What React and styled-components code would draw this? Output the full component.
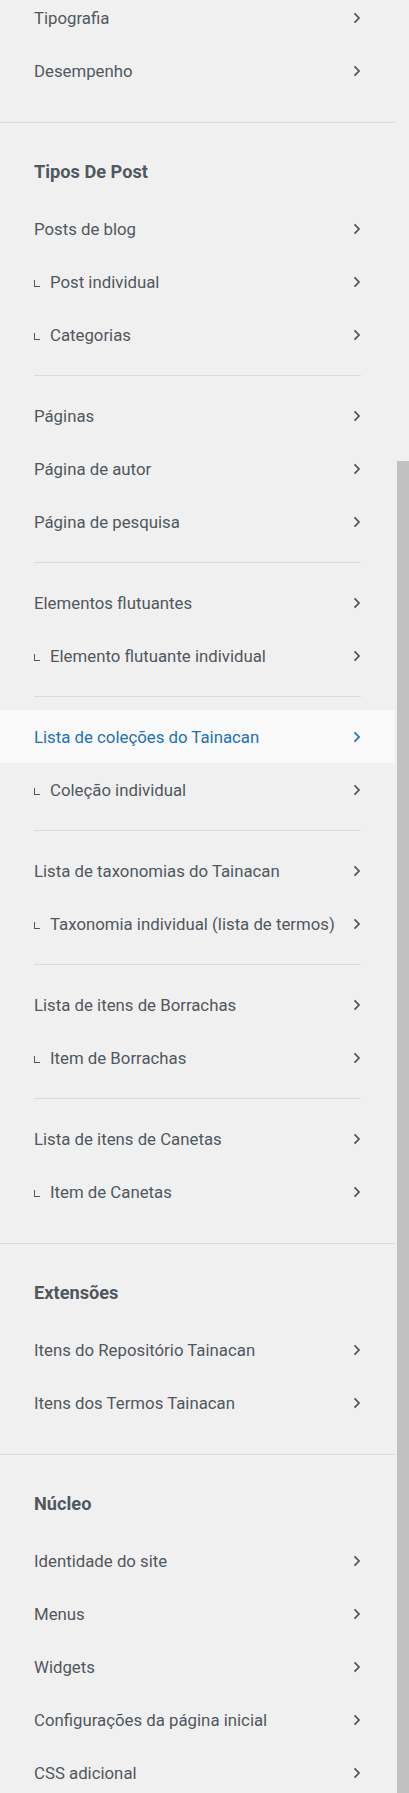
import React from "react";
import styled, { createGlobalStyle } from "styled-components";

const GlobalStyle = createGlobalStyle`
  html, body {
    margin: 0;
    padding: 0;
    background: #f0f0f1;
  }
  body {
    font-family: Roboto, "Noto Sans", "Liberation Sans", sans-serif;
    overflow: hidden;
  }
`;

const Frame = styled.div`
  display: flex;
  width: 409px;
  height: 1793px;
  overflow: hidden;
  background: #f0f0f1;
`;

const Panel = styled.div`
  width: 395px;
  flex: none;
  margin-top: -9px; // page is scrolled a bit
`;

const ScrollTrack = styled.div`
  flex: none;
  width: 14px;
  display: flex;
  flex-direction: column;
  padding-left: 2px;
  box-sizing: border-box;
`;

const ScrollThumb = styled.div`
  margin-top: 461px;
  flex: 1;
  background: #c1c1c1;
`;

const Section = styled.ul`
  list-style: none;
  margin: 0;
  padding: 0 0 25px;
  border-top: ${(p) => (p.$first ? "none" : "1px solid #dcdcde")};
`;

const Heading = styled.h3`
  margin: 0;
  padding: 37px 34px 18px;
  font-size: 18.2px;
  line-height: 24px;
  font-weight: 700;
  color: #50575e;
`;

const Row = styled.li`
  display: flex;
  align-items: center;
  height: 53px;
  padding: 0 34px;
  font-size: 16.8px;
  color: ${(p) => (p.$active ? "#2271b1" : "#50575e")};
  background: ${(p) => (p.$active ? "#f9f9f9" : "transparent")};
  cursor: pointer;
`;

const Label = styled.span`
  flex: 1;
  display: flex;
  align-items: center;
  white-space: nowrap;
`;

const SubMark = styled.span`
  display: inline-block;
  width: 5px;
  height: 6px;
  border-left: 1.5px solid #50575e;
  border-bottom: 1.5px solid #50575e;
  margin: 4px 10px 0 0;
`;

const Divider = styled.li`
  height: 1px;
  margin: 14px 34px 13px;
  background: #dcdcde;
`;

const Chevron = ({ color }) => (
  <svg width="8" height="12" viewBox="0 0 8 12" style={{ flex: "none" }}>
    <path d="M1.5 1.3 L6 6 L1.5 10.7" fill="none" stroke={color} strokeWidth="1.8" />
  </svg>
);

const Item = ({ label, sub, active }) => (
  <Row $active={active}>
    <Label>
      {sub && <SubMark />}
      {label}
    </Label>
    <Chevron color={active ? "#2271b1" : "#50575e"} />
  </Row>
);

const groups = [
  {
    first: true,
    blocks: [[{ label: "Tipografia" }, { label: "Desempenho" }]],
  },
  {
    title: "Tipos De Post",
    blocks: [
      [
        { label: "Posts de blog" },
        { label: "Post individual", sub: true },
        { label: "Categorias", sub: true },
      ],
      [
        { label: "Páginas" },
        { label: "Página de autor" },
        { label: "Página de pesquisa" },
      ],
      [
        { label: "Elementos flutuantes" },
        { label: "Elemento flutuante individual", sub: true },
      ],
      [
        { label: "Lista de coleções do Tainacan", active: true },
        { label: "Coleção individual", sub: true },
      ],
      [
        { label: "Lista de taxonomias do Tainacan" },
        { label: "Taxonomia individual (lista de termos)", sub: true },
      ],
      [
        { label: "Lista de itens de Borrachas" },
        { label: "Item de Borrachas", sub: true },
      ],
      [
        { label: "Lista de itens de Canetas" },
        { label: "Item de Canetas", sub: true },
      ],
    ],
  },
  {
    title: "Extensões",
    blocks: [
      [
        { label: "Itens do Repositório Tainacan" },
        { label: "Itens dos Termos Tainacan" },
      ],
    ],
  },
  {
    title: "Núcleo",
    blocks: [
      [
        { label: "Identidade do site" },
        { label: "Menus" },
        { label: "Widgets" },
        { label: "Configurações da página inicial" },
        { label: "CSS adicional" },
      ],
    ],
  },
];

export default function App() {
  return (
    <Frame>
      <GlobalStyle />
      <Panel>
        {groups.map((group, gi) => (
          <Section key={gi} $first={group.first}>
            {group.title && <Heading>{group.title}</Heading>}
            {group.blocks.map((block, bi) => (
              <React.Fragment key={bi}>
                {bi > 0 && <Divider />}
                {block.map((item) => (
                  <Item key={item.label} {...item} />
                ))}
              </React.Fragment>
            ))}
          </Section>
        ))}
      </Panel>
      <ScrollTrack>
        <ScrollThumb />
      </ScrollTrack>
    </Frame>
  );
}
